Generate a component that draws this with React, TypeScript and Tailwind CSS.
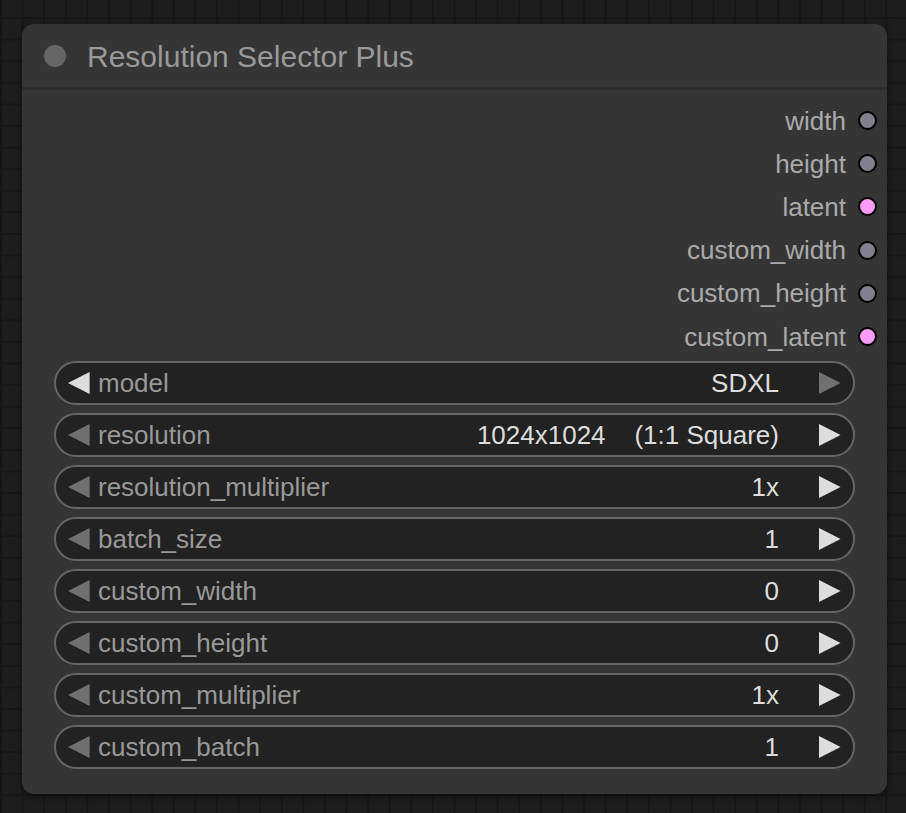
import React from 'react';

const outputs = [
  { name: 'width', color: 'bg-[#80808f]' },
  { name: 'height', color: 'bg-[#80808f]' },
  { name: 'latent', color: 'bg-[#ff9cf9]' },
  { name: 'custom_width', color: 'bg-[#80808f]' },
  { name: 'custom_height', color: 'bg-[#80808f]' },
  { name: 'custom_latent', color: 'bg-[#ff9cf9]' },
];

const widgets = [
  { label: 'model', value: 'SDXL', leftOn: true, rightOn: false },
  { label: 'resolution', value: '1024x1024    (1:1 Square)', leftOn: false, rightOn: true },
  { label: 'resolution_multiplier', value: '1x', leftOn: false, rightOn: true },
  { label: 'batch_size', value: '1', leftOn: false, rightOn: true },
  { label: 'custom_width', value: '0', leftOn: false, rightOn: true },
  { label: 'custom_height', value: '0', leftOn: false, rightOn: true },
  { label: 'custom_multiplier', value: '1x', leftOn: false, rightOn: true },
  { label: 'custom_batch', value: '1', leftOn: false, rightOn: true },
];

const Arrow = ({ dir, on }: { dir: 'left' | 'right'; on: boolean }) => (
  <svg width="22" height="22" viewBox="0 0 22 22" className="shrink-0">
    <polygon
      points={dir === 'left' ? '21.6,0 0,11 21.6,22' : '0,0 21.6,11 0,22'}
      fill={on ? '#dddddd' : '#707070'}
    />
  </svg>
);

const App = () => {
  return (
    <div
      className="min-h-screen w-full bg-[#1d1d1d] bg-[linear-gradient(to_right,#161616_2px,transparent_2px),linear-gradient(to_bottom,#161616_2px,transparent_2px)] bg-size-[21.6px_21.6px] bg-position-[0px_17px] pt-[24px] pl-[22px] pb-[19px]"
      style={{ fontFamily: '"Liberation Sans", Arial, sans-serif' }}
    >
      <div className="w-[865px] h-[770px] rounded-[12px] bg-[#353535] shadow-[0_2px_6px_rgba(0,0,0,0.5)] flex flex-col">
        {/* title */}
        <div className="h-[63px] flex items-center">
          <div className="ml-[22px] mt-[1px] w-[22px] h-[22px] rounded-full bg-[#666666]" />
          <span className="ml-[21px] mt-[2px] text-[30px] leading-none text-[#999999]">Resolution Selector Plus</span>
        </div>
        <div className="h-[3px] bg-[#2c2c2c]" />

        {/* outputs */}
        <div className="pt-[9px] flex flex-col">
          {outputs.map((o) => (
            <div key={o.name} className="h-[43.2px] flex items-center justify-end pr-[10px]">
              <span className="text-[26px] leading-none text-[#aaaaaa]">{o.name}</span>
              <div className={`ml-[12px] w-[19px] h-[19px] rounded-full border-2 border-black ${o.color}`} />
            </div>
          ))}
        </div>

        {/* widgets */}
        <div className="mt-[3px] px-[32px] flex flex-col gap-[8px]">
          {widgets.map((w) => (
            <div
              key={w.label}
              className="h-[44px] rounded-full border-2 border-[#666666] bg-[#222222] flex items-center pl-[12px] pr-[12px]"
            >
              <Arrow dir="left" on={w.leftOn} />
              <span className="ml-[8px] text-[26px] leading-none text-[#999999]">{w.label}</span>
              <span className="ml-auto text-[26px] leading-none text-[#dddddd] whitespace-pre">{w.value}</span>
              <div className="ml-[40px]">
                <Arrow dir="right" on={w.rightOn} />
              </div>
            </div>
          ))}
        </div>
      </div>
    </div>
  );
};

export default App;
